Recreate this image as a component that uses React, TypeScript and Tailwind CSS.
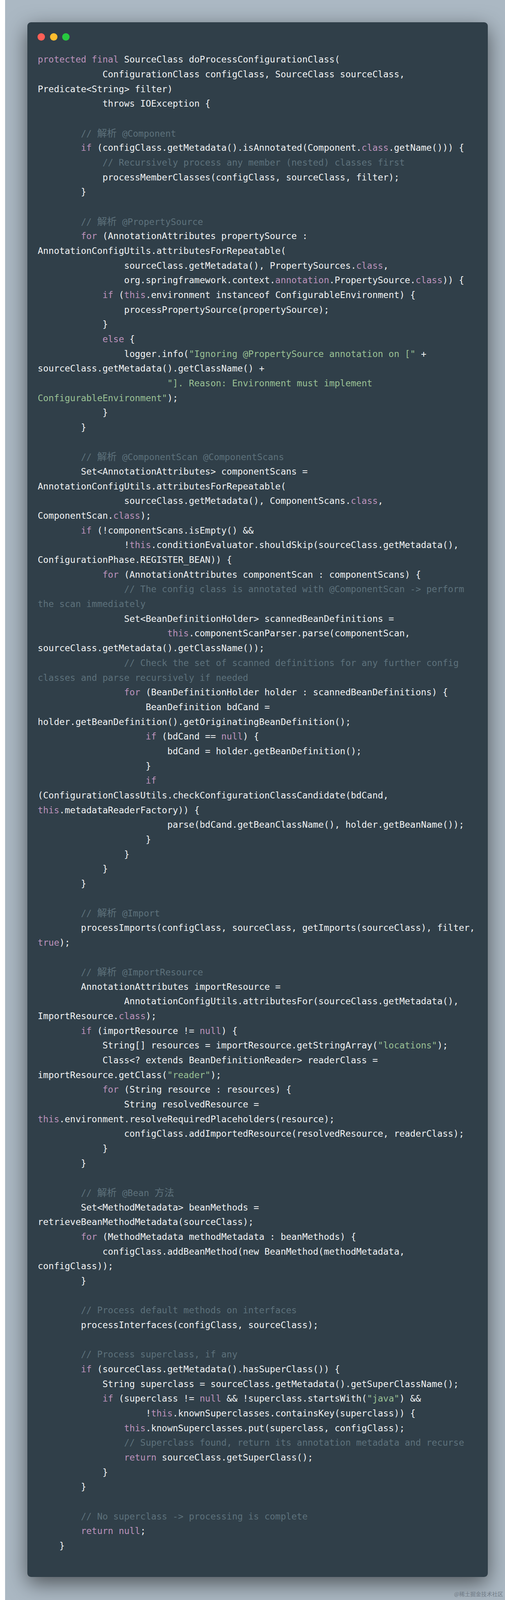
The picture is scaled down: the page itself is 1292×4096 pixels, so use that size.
const CODE = `~protected~ ~final~ SourceClass doProcessConfigurationClass(
            ConfigurationClass configClass, SourceClass sourceClass,
Predicate<String> filter)
            throws IOException {

#        // 解析 @Component
        ~if~ (configClass.getMetadata().isAnnotated(Component.~class~.getName())) {
#            // Recursively process any member (nested) classes first
            processMemberClasses(configClass, sourceClass, filter);
        }

#        // 解析 @PropertySource
        ~for~ (AnnotationAttributes propertySource :
AnnotationConfigUtils.attributesForRepeatable(
                sourceClass.getMetadata(), PropertySources.~class~,
                org.springframework.context.~annotation~.PropertySource.~class~)) {
            ~if~ (~this~.environment instanceof ConfigurableEnvironment) {
                processPropertySource(propertySource);
            }
            ~else~ {
                logger.info(^"Ignoring @PropertySource annotation on ["^ +
sourceClass.getMetadata().getClassName() +
                        ^"]. Reason: Environment must implement^
^ConfigurableEnvironment"^);
            }
        }

#        // 解析 @ComponentScan @ComponentScans
        Set<AnnotationAttributes> componentScans =
AnnotationConfigUtils.attributesForRepeatable(
                sourceClass.getMetadata(), ComponentScans.~class~,
ComponentScan.~class~);
        ~if~ (!componentScans.isEmpty() &&
                !~this~.conditionEvaluator.shouldSkip(sourceClass.getMetadata(),
ConfigurationPhase.REGISTER_BEAN)) {
            ~for~ (AnnotationAttributes componentScan : componentScans) {
#                // The config class is annotated with @ComponentScan -> perform
#the scan immediately
                Set<BeanDefinitionHolder> scannedBeanDefinitions =
                        ~this~.componentScanParser.parse(componentScan,
sourceClass.getMetadata().getClassName());
#                // Check the set of scanned definitions for any further config
#classes and parse recursively if needed
                ~for~ (BeanDefinitionHolder holder : scannedBeanDefinitions) {
                    BeanDefinition bdCand =
holder.getBeanDefinition().getOriginatingBeanDefinition();
                    ~if~ (bdCand == ~null~) {
                        bdCand = holder.getBeanDefinition();
                    }
                    ~if~
(ConfigurationClassUtils.checkConfigurationClassCandidate(bdCand,
~this~.metadataReaderFactory)) {
                        parse(bdCand.getBeanClassName(), holder.getBeanName());
                    }
                }
            }
        }

#        // 解析 @Import
        processImports(configClass, sourceClass, getImports(sourceClass), filter,
~true~);

#        // 解析 @ImportResource
        AnnotationAttributes importResource =
                AnnotationConfigUtils.attributesFor(sourceClass.getMetadata(),
ImportResource.~class~);
        ~if~ (importResource != ~null~) {
            String[] resources = importResource.getStringArray(^"locations"^);
            Class<? extends BeanDefinitionReader> readerClass =
importResource.getClass(^"reader"^);
            ~for~ (String resource : resources) {
                String resolvedResource =
~this~.environment.resolveRequiredPlaceholders(resource);
                configClass.addImportedResource(resolvedResource, readerClass);
            }
        }

#        // 解析 @Bean 方法
        Set<MethodMetadata> beanMethods =
retrieveBeanMethodMetadata(sourceClass);
        ~for~ (MethodMetadata methodMetadata : beanMethods) {
            configClass.addBeanMethod(new BeanMethod(methodMetadata,
configClass));
        }

#        // Process default methods on interfaces
        processInterfaces(configClass, sourceClass);

#        // Process superclass, if any
        ~if~ (sourceClass.getMetadata().hasSuperClass()) {
            String superclass = sourceClass.getMetadata().getSuperClassName();
            ~if~ (superclass != ~null~ && !superclass.startsWith(^"java"^) &&
                    !~this~.knownSuperclasses.containsKey(superclass)) {
                ~this~.knownSuperclasses.put(superclass, configClass);
#                // Superclass found, return its annotation metadata and recurse
                ~return~ sourceClass.getSuperClass();
            }
        }

#        // No superclass -> processing is complete
        ~return~ ~null~;
    }`;

function Cjk({ text }: { text: string }) {
  return (
    <>
      {text.split(/([\u4e00-\u9fff]+)/).map((part, i) =>
        i % 2 === 1 ? (
          <span key={i} className="text-[25.12px]">
            {part}
          </span>
        ) : (
          <span key={i}>{part}</span>
        ),
      )}
    </>
  );
}

function Line({ source }: { source: string }) {
  if (source.startsWith("#")) {
    return (
      <div className="h-[37.68px] text-[#5d717b]">
        <Cjk text={source.slice(1)} />
      </div>
    );
  }
  const tokens = source.split(/(~[^~]*~|\^[^^]*\^)/);
  return (
    <div className="h-[37.68px]">
      {tokens.map((t, i) => {
        if (t.startsWith("~")) {
          return (
            <span key={i} className="text-[#bb92bb]">
              {t.slice(1, -1)}
            </span>
          );
        }
        if (t.startsWith("^")) {
          return (
            <span key={i} className="text-[#99c094]">
              {t.slice(1, -1)}
            </span>
          );
        }
        return <span key={i}>{t}</span>;
      })}
    </div>
  );
}

export default function App() {
  const lines = CODE.split("\n");
  return (
    <div className="relative h-[4096px] w-[1292px] overflow-hidden bg-white pl-[13.3px]">
      <div className="h-full bg-[#abb8c3] pl-[56.6px] pr-[44px] pt-[56.5px]">
        <div className="h-[3980px] rounded-[9.5px] bg-[#303f49] pl-[26.6px] pt-[28.3px] shadow-[0_16px_53px_rgba(0,0,0,0.55)]">
          <div className="flex gap-[12.6px]">
            <div className="h-[18.8px] w-[18.8px] rounded-full bg-[#ff5f56]" />
            <div className="h-[18.8px] w-[18.8px] rounded-full bg-[#ffbd2e]" />
            <div className="h-[18.8px] w-[18.8px] rounded-full bg-[#27c93f]" />
          </div>
          <div className="mt-[30.7px] whitespace-pre font-['DejaVu_Sans_Mono','Noto_Sans_CJK_SC',monospace] text-[22.95px] leading-[37.68px] text-[#f0f2f3]">
            {lines.map((l, i) => (
              <Line key={i} source={l} />
            ))}
          </div>
        </div>
      </div>
      <div className="absolute bottom-[7px] right-[5px] font-['Noto_Sans_CJK_SC',sans-serif] text-[14px] leading-[18px] text-[#6f7a85]">
        @稀土掘金技术社区
      </div>
    </div>
  );
}
